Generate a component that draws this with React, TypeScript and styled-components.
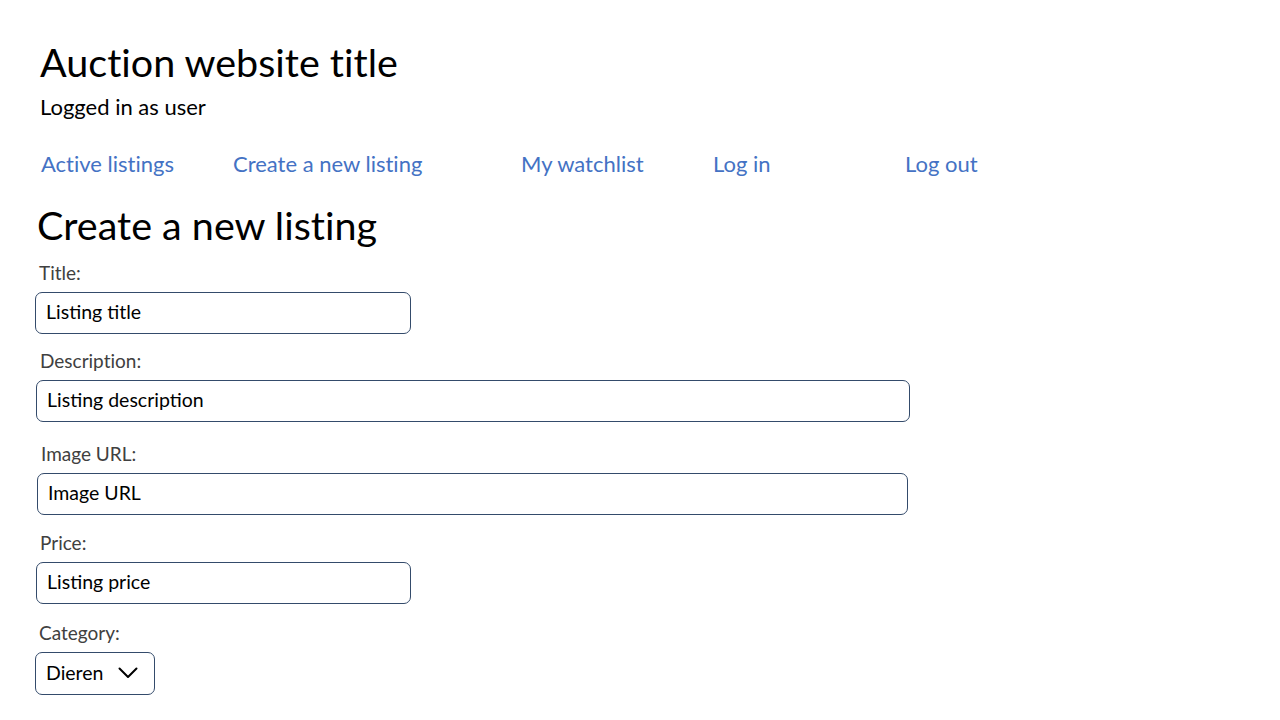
import React from 'react';
import styled, {createGlobalStyle} from 'styled-components';

const GlobalStyle = createGlobalStyle`
	body {
		margin: 0;
		background: #ffffff;
		font-family: 'Lato', 'Open Sans', sans-serif;
		font-variant-ligatures: none;
		color: #000000;
	}
`;

interface IWidth {
	width: number;
}
interface IShift {
	shift?: number;
	top?: number;
}

const Page = styled.div`
	display: flex;
	flex-direction: column;
	width: 1280px;
	height: 720px;
	padding: 36px 0 0 40px;
	box-sizing: border-box;
	overflow: hidden;
`;
const SiteTitle = styled.h1`
	margin: 0;
	font-size: 39.5px;
	font-weight: 400;
	line-height: 52px;
`;
const LoggedIn = styled.div`
	margin-top: 6px;
	font-size: 22px;
	line-height: 26px;
`;
const Nav = styled.nav`
	display: flex;
	margin-top: 31px;
	margin-left: 1px;
`;
const NavLink = styled.a<IWidth>`
	width: ${(props) => props.width}px;
	flex-shrink: 0;
	font-size: 22px;
	line-height: 26px;
	color: #4472c4;
	text-decoration: none;
	cursor: pointer;
`;
const Heading = styled.h2`
	margin: 25px 0 0 -3px;
	font-size: 39.5px;
	font-weight: 400;
	line-height: 46px;
`;
const Form = styled.form`
	display: flex;
	flex-direction: column;
`;
const Field = styled.div<IShift>`
	display: flex;
	flex-direction: column;
	align-items: flex-start;
	margin-top: ${(props) => props.top ?? 0}px;
	margin-left: ${(props) => props.shift ?? 0}px;
`;
const Label = styled.label`
	font-size: 19px;
	line-height: 24px;
	color: #404040;
`;
const Input = styled.input<IWidth>`
	width: ${(props) => props.width}px;
	height: 42px;
	margin-top: 7px;
	margin-left: -4px;
	padding: 0 10px 3px;
	box-sizing: border-box;
	border: 1px solid #344b6b;
	border-radius: 7px;
	font-family: inherit;
	font-size: 19.5px;
	color: #000000;
	background: #ffffff;
	outline: none;
	&::placeholder {
		color: #000000;
		opacity: 1;
	}
`;
const Select = styled.button`
	display: flex;
	align-items: center;
	gap: 14px;
	width: 120px;
	height: 43px;
	margin-top: 7px;
	margin-left: -4px;
	padding: 0 0 2px 10px;
	box-sizing: border-box;
	border: 1px solid #344b6b;
	border-radius: 7px;
	background: #ffffff;
	font-family: inherit;
	font-size: 19.5px;
	color: #000000;
	cursor: pointer;
`;

function Chevron() {
	return (
		<svg width="20" height="12" viewBox="0 0 20 12" fill="none">
			<polyline
				points="1.5,1.5 10,10 18.5,1.5"
				stroke="#000"
				strokeWidth="2"
				strokeLinecap="round"
				strokeLinejoin="round"
			/>
		</svg>
	);
}

function App() {
	return (
		<>
			<GlobalStyle />
			<Page>
				<SiteTitle>Auction website title</SiteTitle>
				<LoggedIn>Logged in as user</LoggedIn>
				<Nav>
					<NavLink width={192}>Active listings</NavLink>
					<NavLink width={288}>Create a new listing</NavLink>
					<NavLink width={192}>My watchlist</NavLink>
					<NavLink width={192}>Log in</NavLink>
					<NavLink width={192}>Log out</NavLink>
				</Nav>
				<Heading>Create a new listing</Heading>
				<Form>
					<Field top={13} shift={-1}>
						<Label>Title:</Label>
						<Input width={376} placeholder="Listing title" />
					</Field>
					<Field top={15}>
						<Label>Description:</Label>
						<Input width={874} placeholder="Listing description" />
					</Field>
					<Field top={20} shift={1}>
						<Label>Image URL:</Label>
						<Input width={871} placeholder="Image URL" />
					</Field>
					<Field top={16}>
						<Label>Price:</Label>
						<Input width={375} placeholder="Listing price" />
					</Field>
					<Field top={17} shift={-1}>
						<Label>Category:</Label>
						<Select type="button">
							Dieren
							<Chevron />
						</Select>
					</Field>
				</Form>
			</Page>
		</>
	);
}

export default App;
